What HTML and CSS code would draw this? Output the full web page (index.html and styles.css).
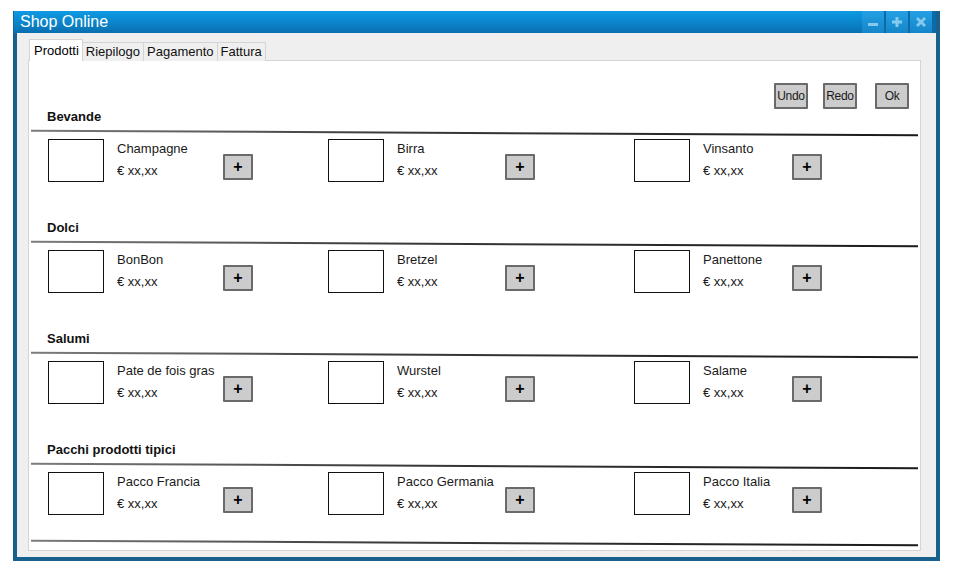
FILE: index.html
```html
<!DOCTYPE html>
<html lang="it">
<head>
<meta charset="utf-8">
<title>Shop Online</title>
<link rel="stylesheet" href="styles.css">
</head>
<body>
<div class="window">
  <div class="titlebar">
    <span class="title">Shop Online</span>
    <div class="controls">
      <span class="ctl"><svg width="12" height="12" viewBox="0 0 12 12"><rect x="1" y="7" width="10" height="3" fill="#86c9ef"/></svg></span>
      <span class="ctl"><svg width="12" height="12" viewBox="0 0 12 12"><path d="M4.5 1h3v3.5H11v3H7.5V11h-3V7.5H1v-3h3.5z" fill="#86c9ef"/></svg></span>
      <span class="ctl"><svg width="12" height="12" viewBox="0 0 12 12"><path d="M1 3l2-2 3 3 3-3 2 2-3 3 3 3-2 2-3-3-3 3-2-2 3-3z" fill="#86c9ef"/></svg></span>
    </div>
  </div>
  <div class="frame">
    <div class="tabs">
      <span class="tab active">Prodotti</span>
      <span class="tab">Riepilogo</span>
      <span class="tab">Pagamento</span>
      <span class="tab">Fattura</span>
    </div>
    <div class="panel">
      <div class="toolbar">
        <button class="btn">Undo</button>
        <button class="btn redo">Redo</button>
        <button class="btn ok">Ok</button>
      </div>

      <section class="section first">
        <h3 class="heading">Bevande</h3>
        <div class="rule"></div>
        <div class="items">
          <div class="item"><div class="thumb"></div><div class="info"><div class="name">Champagne</div><div class="price">€ xx,xx</div></div><button class="plus">+</button></div>
          <div class="item"><div class="thumb"></div><div class="info"><div class="name">Birra</div><div class="price">€ xx,xx</div></div><button class="plus">+</button></div>
          <div class="item"><div class="thumb"></div><div class="info"><div class="name">Vinsanto</div><div class="price">€ xx,xx</div></div><button class="plus">+</button></div>
        </div>
      </section>

      <section class="section">
        <h3 class="heading">Dolci</h3>
        <div class="rule"></div>
        <div class="items">
          <div class="item"><div class="thumb"></div><div class="info"><div class="name">BonBon</div><div class="price">€ xx,xx</div></div><button class="plus">+</button></div>
          <div class="item"><div class="thumb"></div><div class="info"><div class="name">Bretzel</div><div class="price">€ xx,xx</div></div><button class="plus">+</button></div>
          <div class="item"><div class="thumb"></div><div class="info"><div class="name">Panettone</div><div class="price">€ xx,xx</div></div><button class="plus">+</button></div>
        </div>
      </section>

      <section class="section">
        <h3 class="heading">Salumi</h3>
        <div class="rule"></div>
        <div class="items">
          <div class="item"><div class="thumb"></div><div class="info"><div class="name">Pate de fois gras</div><div class="price">€ xx,xx</div></div><button class="plus">+</button></div>
          <div class="item"><div class="thumb"></div><div class="info"><div class="name">Wurstel</div><div class="price">€ xx,xx</div></div><button class="plus">+</button></div>
          <div class="item"><div class="thumb"></div><div class="info"><div class="name">Salame</div><div class="price">€ xx,xx</div></div><button class="plus">+</button></div>
        </div>
      </section>

      <section class="section">
        <h3 class="heading">Pacchi prodotti tipici</h3>
        <div class="rule"></div>
        <div class="items">
          <div class="item"><div class="thumb"></div><div class="info"><div class="name">Pacco Francia</div><div class="price">€ xx,xx</div></div><button class="plus">+</button></div>
          <div class="item"><div class="thumb"></div><div class="info"><div class="name">Pacco Germania</div><div class="price">€ xx,xx</div></div><button class="plus">+</button></div>
          <div class="item"><div class="thumb"></div><div class="info"><div class="name">Pacco Italia</div><div class="price">€ xx,xx</div></div><button class="plus">+</button></div>
        </div>
      </section>

      <div class="rule bottom"></div>
    </div>
  </div>
</div>
</body>
</html>
```

FILE: styles.css
```css
* { box-sizing: border-box; }

html, body {
  margin: 0;
  padding: 0;
  background: #ffffff;
  font-family: "Liberation Sans", Arial, sans-serif;
  color: #111;
}

.window {
  margin: 11px 0 0 13px;
  width: 927px;
  height: 550px;
  display: flex;
  flex-direction: column;
}

.titlebar {
  height: 22px;
  flex: none;
  display: flex;
  align-items: center;
  justify-content: space-between;
  background: linear-gradient(to bottom, #0e9ae2 0%, #0a84cb 55%, #0a6eae 100%);
  border-left: 1px solid #12699a;
}

.title {
  color: #ffffff;
  font-size: 16px;
  padding-left: 6px;
  line-height: 22px;
}

.controls {
  display: flex;
  height: 22px;
  padding-right: 4px;
  border-right: 4px solid #17618c;
  gap: 2px;
  background: #0c6aa6;
}

.ctl {
  width: 22px;
  height: 22px;
  display: flex;
  align-items: center;
  justify-content: center;
  background: linear-gradient(to bottom, #24a0e4, #1585c9);
}

.frame {
  flex: 1;
  display: flex;
  flex-direction: column;
  background: #efefef;
  border: 4px solid #17618c;
  border-top: none;
  padding: 6px 15px 6px 11px;
}

.tabs {
  display: flex;
  align-items: flex-end;
  height: 22px;
  padding-left: 1px;
  flex: none;
  position: relative;
  z-index: 1;
  margin-bottom: -1px;
}

.tab {
  font-size: 13px;
  line-height: 18px;
  padding: 0 3px;
  background: #efefef;
  border: 1px solid #d4d4d4;
  border-bottom: none;
  margin-left: -1px;
  color: #111;
}

.tab:first-child { margin-left: 0; }

.tab.active {
  background: #ffffff;
  line-height: 21px;
  padding: 0 3px 0 4px;
  border-color: #d4d4d4;
  color: #000;
}

.panel {
  flex: 1;
  background: #ffffff;
  border: 1px solid #d4d4d4;
  overflow: hidden;
  padding-top: 22px;
}

.toolbar {
  display: flex;
  justify-content: flex-end;
  padding-right: 11px;
  height: 26px;
}

.btn {
  width: 34px;
  height: 26px;
  background: #cccccc;
  border: 2px solid #6a6a6a;
  border-radius: 1px;
  font-family: "Liberation Sans", Arial, sans-serif;
  font-size: 12px;
  color: #1a1a1a;
  padding: 0;
  letter-spacing: -0.3px;
}

.btn.redo { margin-left: 15px; }
.btn.ok { margin-left: 18px; }

.section { margin-top: 38px; }
.section.first { margin-top: 0; }

.heading {
  margin: 0;
  padding-left: 18px;
  font-size: 13px;
  font-weight: bold;
  line-height: 16px;
  color: #111;
}

.rule {
  height: 2px;
  margin: 7px 2px 0 2px;
  background: linear-gradient(to right, #7d7d7d, #3a3a3a 40%, #1a1a1a);
  transform: rotate(0.3deg);
}

.rule.bottom { margin-top: 27px; }

.items {
  display: grid;
  grid-template-columns: 280px 306px 1fr;
  padding-left: 19px;
  margin-top: 5px;
}

.item {
  display: grid;
  grid-template-columns: 56px 1fr 30px;
  align-items: start;
}

.item:nth-child(1) { width: 205px; }
.item:nth-child(2) { width: 207px; }
.item:nth-child(3) { width: 188px; }

.thumb {
  width: 56px;
  height: 43px;
  border: 1px solid #111;
  background: #fff;
}

.info {
  margin-left: 13px;
  padding-top: 2px;
  font-size: 13px;
  color: #1a1a1a;
}

.name { line-height: 16px; }
.price { line-height: 16px; margin-top: 6px; }

.plus {
  margin-top: 15px;
  width: 30px;
  height: 26px;
  padding: 0;
  background: #cccccc;
  border: 2px solid #6a6a6a;
  border-radius: 1px;
  font-family: "Liberation Sans", Arial, sans-serif;
  font-size: 16px;
  font-weight: bold;
  line-height: 20px;
  color: #000;
}
```
